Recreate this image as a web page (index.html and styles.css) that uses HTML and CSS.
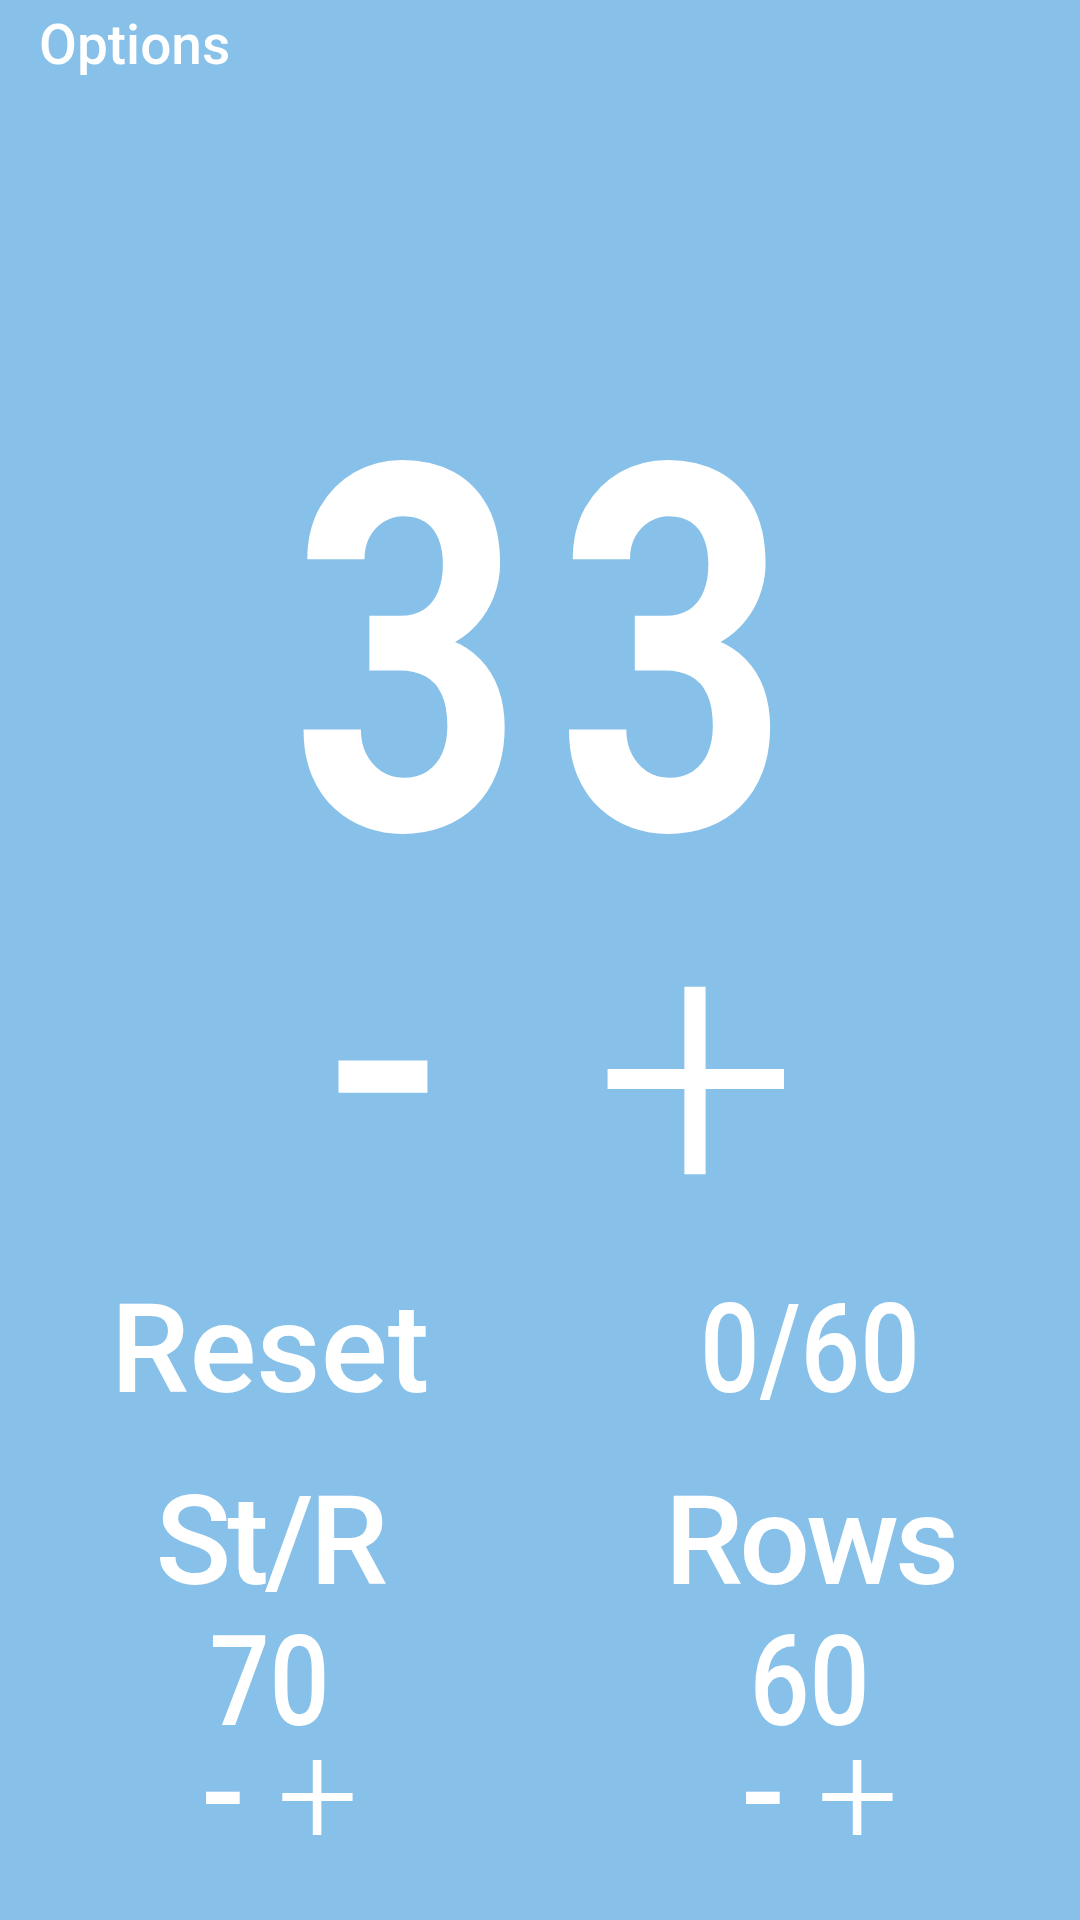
FILE: index.html
```html
<!DOCTYPE html>
<html lang="en">
<head>
<meta charset="utf-8">
<title>Row Counter</title>
<link rel="stylesheet" href="styles.css">
</head>
<body>
<div class="screen">
  <header class="topbar">
    <button class="options">Options</button>
  </header>
  <main class="counter">
    <div class="count"><span class="count-text">33</span></div>
    <div class="stepper">
      <button class="step step-minus">-</button>
      <button class="step step-plus">+</button>
    </div>
  </main>
  <section class="panel">
    <div class="cell">
      <button class="label">Reset</button>
    </div>
    <div class="cell">
      <span class="label num">0/60</span>
    </div>
    <div class="cell">
      <span class="label narrow">St/R</span>
      <span class="value num">70</span>
      <div class="mini">
        <button class="mini-btn mini-minus">-</button>
        <button class="mini-btn mini-plus">+</button>
      </div>
    </div>
    <div class="cell">
      <span class="label narrow">Rows</span>
      <span class="value num">60</span>
      <div class="mini">
        <button class="mini-btn mini-minus">-</button>
        <button class="mini-btn mini-plus">+</button>
      </div>
    </div>
  </section>
</div>
</body>
</html>
```
FILE: styles.css
```css
html, body {
  margin: 0;
  padding: 0;
}
body {
  background: #87c1e9;
  color: #ffffff;
  font-family: Roboto, "Noto Sans", sans-serif;
}
button {
  background: none;
  border: 0;
  padding: 0;
  margin: 0;
  color: inherit;
  font-family: inherit;
  cursor: pointer;
}
.screen {
  width: 1080px;
  height: 1920px;
  display: flex;
  flex-direction: column;
  overflow: hidden;
}
.topbar {
  padding: 18px 0 0 39px;
  display: flex;
}
.options {
  font-size: 55px;
  line-height: 55px;
  font-weight: 500;
}
.counter {
  display: flex;
  flex-direction: column;
  align-items: center;
}
.count {
  margin-top: 325px;
  height: 512px;
  display: flex;
  justify-content: center;
  width: 100%;
}
.count-text {
  display: block;
  font-size: 512px;
  line-height: 512px;
  font-weight: 700;
  letter-spacing: 41px;
  padding-left: 41px;
  transform: scaleX(0.793);
}
.stepper {
  margin-top: 69px;
  height: 200px;
  display: flex;
  align-items: center;
  justify-content: center;
  gap: 93px;
}
.step {
  width: 220px;
  height: 200px;
  line-height: 200px;
  text-align: center;
}
.step-minus {
  font-size: 344px;
  font-weight: 500;
  margin-bottom: 30px;
}
.step-plus {
  font-size: 362px;
  font-weight: 300;
  margin-bottom: 7px;
}
.panel {
  margin-top: 108px;
  display: grid;
  grid-template-columns: 1fr 1fr;
  row-gap: 67px;
}
.cell {
  display: flex;
  flex-direction: column;
  align-items: center;
}
.label {
  font-size: 125px;
  line-height: 125px;
  font-weight: 500;
  display: block;
}
.narrow {
  letter-spacing: -4px;
}
.num {
  transform: scaleX(0.84);
}
.value {
  margin-top: 15px;
  font-size: 126px;
  line-height: 126px;
  font-weight: 500;
  display: block;
}
.mini {
  margin-top: 11px;
  height: 80px;
  display: flex;
  align-items: center;
  gap: 14px;
}
.mini-btn {
  width: 80px;
  height: 80px;
  line-height: 80px;
  text-align: center;
}
.mini-minus {
  font-size: 130px;
  font-weight: 500;
  margin-bottom: 7px;
}
.mini-plus {
  font-size: 144px;
  font-weight: 300;
}
```
